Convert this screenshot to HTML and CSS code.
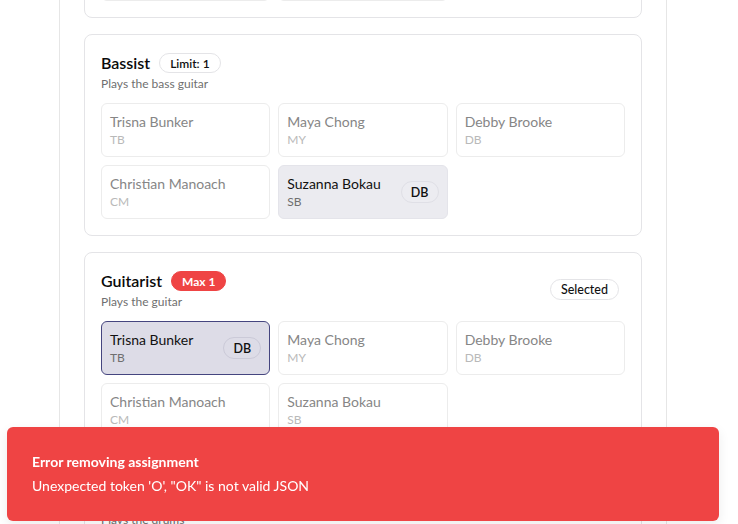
FILE: index.html
```html
<!DOCTYPE html>
<html lang="en">
<head>
<meta charset="utf-8">
<title>Band roles</title>
<link rel="stylesheet" href="styles.css">
</head>
<body>
<main class="panel">
  <section class="role">
    <div class="role-head">
      <div>
        <div class="title-row"><h3 class="role-title">Vocalist</h3><span class="pill">Limit: 1</span></div>
        <p class="role-desc">Sings lead vocals</p>
      </div>
    </div>
    <div class="grid">
      <div class="member"><div class="m-text"><span class="m-name">Trisna Bunker</span><span class="m-init">TB</span></div></div>
      <div class="member"><div class="m-text"><span class="m-name">Maya Chong</span><span class="m-init">MY</span></div></div>
      <div class="member"><div class="m-text"><span class="m-name">Debby Brooke</span><span class="m-init">DB</span></div></div>
      <div class="member"><div class="m-text"><span class="m-name">Christian Manoach</span><span class="m-init">CM</span></div></div>
      <div class="member"><div class="m-text"><span class="m-name">Suzanna Bokau</span><span class="m-init">SB</span></div></div>
    </div>
  </section>

  <section class="role">
    <div class="role-head">
      <div>
        <div class="title-row"><h3 class="role-title">Bassist</h3><span class="pill">Limit: 1</span></div>
        <p class="role-desc">Plays the bass guitar</p>
      </div>
    </div>
    <div class="grid">
      <div class="member"><div class="m-text"><span class="m-name">Trisna Bunker</span><span class="m-init">TB</span></div></div>
      <div class="member"><div class="m-text"><span class="m-name">Maya Chong</span><span class="m-init">MY</span></div></div>
      <div class="member"><div class="m-text"><span class="m-name">Debby Brooke</span><span class="m-init">DB</span></div></div>
      <div class="member"><div class="m-text"><span class="m-name">Christian Manoach</span><span class="m-init">CM</span></div></div>
      <div class="member assigned"><div class="m-text"><span class="m-name">Suzanna Bokau</span><span class="m-init">SB</span></div><span class="tag">DB</span></div>
    </div>
  </section>

  <section class="role">
    <div class="role-head">
      <div>
        <div class="title-row"><h3 class="role-title">Guitarist</h3><span class="pill pill-red">Max 1</span></div>
        <p class="role-desc">Plays the guitar</p>
      </div>
      <span class="pill pill-status">Selected</span>
    </div>
    <div class="grid">
      <div class="member chosen"><div class="m-text"><span class="m-name">Trisna Bunker</span><span class="m-init">TB</span></div><span class="tag">DB</span></div>
      <div class="member"><div class="m-text"><span class="m-name">Maya Chong</span><span class="m-init">MY</span></div></div>
      <div class="member"><div class="m-text"><span class="m-name">Debby Brooke</span><span class="m-init">DB</span></div></div>
      <div class="member"><div class="m-text"><span class="m-name">Christian Manoach</span><span class="m-init">CM</span></div></div>
      <div class="member"><div class="m-text"><span class="m-name">Suzanna Bokau</span><span class="m-init">SB</span></div></div>
    </div>
  </section>

  <section class="role">
    <div class="role-head">
      <div>
        <div class="title-row"><h3 class="role-title">Drummer</h3><span class="pill">Limit: 1</span></div>
        <p class="role-desc">Plays the drums</p>
      </div>
    </div>
    <div class="grid">
      <div class="member"><div class="m-text"><span class="m-name">Trisna Bunker</span><span class="m-init">TB</span></div></div>
      <div class="member"><div class="m-text"><span class="m-name">Maya Chong</span><span class="m-init">MY</span></div></div>
      <div class="member"><div class="m-text"><span class="m-name">Debby Brooke</span><span class="m-init">DB</span></div></div>
    </div>
  </section>
</main>

<div class="toast" role="alert">
  <div class="toast-title">Error removing assignment</div>
  <div class="toast-msg">Unexpected token 'O', "OK" is not valid JSON</div>
</div>
</body>
</html>
```

FILE: styles.css
```css
* { box-sizing: border-box; }

html, body {
  margin: 0;
  padding: 0;
  background: #ffffff;
  font-family: Lato, "Noto Sans", sans-serif;
  color: #111111;
  overflow: hidden;
}

.panel {
  width: 608px;
  margin: -209px 0 0 59px;
  padding: 24px;
  border: 1px solid #e6e6e6;
  display: flex;
  flex-direction: column;
  gap: 16px;
}

.role {
  border: 1px solid #e4e4e7;
  border-radius: 8px;
  padding: 16px;
  background: #fff;
}

.role-head {
  display: flex;
  justify-content: space-between;
  align-items: center;
  padding-right: 6px;
}

.title-row {
  display: flex;
  align-items: center;
  gap: 9px;
  height: 24px;
}

.role-title {
  margin: 0;
  font-size: 16px;
  line-height: 24px;
  font-weight: 600;
  color: #0a0a0a;
}

.role-desc {
  margin: 0;
  font-size: 12px;
  line-height: 17px;
  color: #6f6f6f;
}

.pill {
  display: inline-flex;
  align-items: center;
  height: 20px;
  padding: 0 10px;
  border: 1px solid #e4e4e7;
  border-radius: 999px;
  font-size: 12px;
  font-weight: 600;
  color: #111;
  background: #fff;
}

.pill-red {
  background: #ef4444;
  border-color: #ef4444;
  color: #fff;
  font-weight: 700;
}

.pill-status {
  height: 21px;
  font-weight: 500;
  font-size: 12.5px;
  padding: 0 10px;
}

.grid {
  margin-top: 11px;
  display: grid;
  grid-template-columns: repeat(3, 1fr);
  gap: 8px;
}

.member {
  height: 54px;
  border: 1px solid #ececec;
  border-radius: 6px;
  padding: 8px 8px;
  display: flex;
  align-items: center;
  justify-content: space-between;
  background: #fff;
}

.m-text {
  display: flex;
  flex-direction: column;
  align-self: flex-start;
}

.m-name {
  font-size: 14px;
  line-height: 20px;
  color: #868686;
}

.m-init {
  font-size: 12px;
  line-height: 16px;
  color: #b9b9b9;
}

.member.assigned {
  background: #ebebf0;
  border-color: #e4e4ea;
}

.member.chosen {
  background: #dddce7;
  border-color: #45457f;
}

.member.assigned .m-name,
.member.chosen .m-name {
  color: #111;
}

.member.assigned .m-init,
.member.chosen .m-init {
  color: #6f6f6f;
}

.tag {
  display: inline-flex;
  align-items: center;
  justify-content: center;
  width: 38px;
  height: 22px;
  border-radius: 999px;
  border: 1px solid #dfdfe6;
  background: #ececf1;
  font-size: 12.5px;
  font-weight: 600;
  color: #111;
}

.member.chosen .tag {
  background: #dddce7;
  border-color: #cbcad8;
}

.toast {
  position: fixed;
  left: 7px;
  bottom: 3px;
  width: 712px;
  padding: 25px;
  background: #ef4444;
  border-radius: 6px;
  color: #fff;
  display: flex;
  flex-direction: column;
  gap: 4px;
  box-shadow: 0 4px 12px rgba(0, 0, 0, 0.08);
}

.toast-title {
  font-size: 14px;
  line-height: 20px;
  font-weight: 700;
}

.toast-msg {
  font-size: 14px;
  line-height: 20px;
}
```
